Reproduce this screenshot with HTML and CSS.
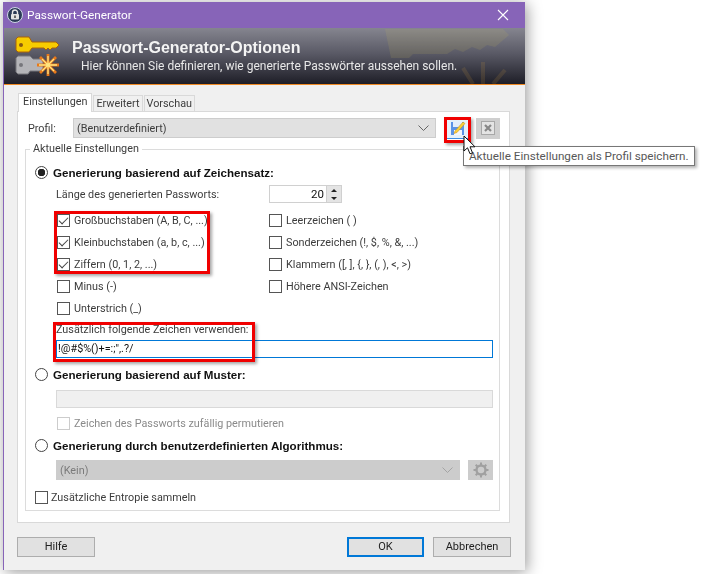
FILE: index.html
```html
<!DOCTYPE html>
<html>
<head>
    <title>Passwort-Generator</title>
    <link rel="stylesheet" href="styles.css">
</head>
<body>
    <div class="window">
        <div class="title-bar">
            <svg class="title-icon" width="16" height="16" viewBox="0 0 16 16">
                <circle cx="8" cy="8" r="7.5" fill="#2b3a55" stroke="#cfd6e6"/>
                <path d="M5.5 7.5V5.5a2.5 2.5 0 0 1 5 0v2" fill="none" stroke="#e6e6e6" stroke-width="1.4"/>
                <rect x="4" y="7" width="8" height="5.5" rx="1" fill="#e2e2e2"/>
                <rect x="7.3" y="8.5" width="1.4" height="2.5" fill="#333"/>
            </svg>
            <span class="title-text">Passwort-Generator</span>
            <svg class="close-icon" width="12" height="12" viewBox="0 0 12 12">
                <path d="M1 1l10 10M11 1L1 11" stroke="#fff" stroke-width="1.1"/>
            </svg>
        </div>

        <div class="banner">
            <svg class="banner-icon" width="46" height="42" viewBox="0 0 46 42">
                <path d="M3 2h11l3 5h24l3 3-3 3h-4l-2 2-2-2-2 2-2-2H17l-3 4H3l-2-2V4z" fill="#f7cc00" stroke="#a8620c"/>
                <circle cx="6" cy="10" r="2" fill="#8a5a10"/>
                <path d="M3 21h12l3 3h10v12H15l-2 3H3l-2-2V23z" fill="#b4b4b8" stroke="#77777c"/>
                <circle cx="6" cy="30" r="2" fill="#77777c"/>
                <path d="M33 19v22M22 30h22M25 22l16 16M41 22L25 38" stroke="#e8781a" stroke-width="2.8"/>
                <path d="M33 21v18M24 30h18M27 24l12 12M39 24L27 36" stroke="#ffe680" stroke-width="1.3"/>
            </svg>
            <svg class="banner-mark" width="128" height="56" viewBox="0 0 128 56">
                <path d="M2 1h118l6 6-14 12-8-2-7 5-8-3-9 5-8-3-8 5H30l-4 4H8z" fill="#c8b85a" opacity=".14"/>
                <path d="M90 56l-10-16M100 56V34M110 56l12-14" stroke="#d8a040" stroke-width="4" opacity=".14"/>
            </svg>
            <div class="banner-text">
                <h1>Passwort-Generator-Optionen</h1>
                <p>Hier können Sie definieren, wie generierte Passwörter aussehen sollen.</p>
            </div>
        </div>

        <div class="tabs">
            <div class="tab tab-active">Einstellungen</div>
            <div class="tab">Erweitert</div>
            <div class="tab">Vorschau</div>
        </div>

        <div class="panel">
            <div class="profile-row">
                <span class="profile-label">Profil:</span>
                <div class="combo profile-combo">
                    <span>(Benutzerdefiniert)</span>
                    <svg class="chevron" width="11" height="6" viewBox="0 0 11 6"><path d="M.5.5l5 5 5-5" fill="none" stroke="#666"/></svg>
                </div>
                <div class="tool-button save-button">
                    <svg width="16" height="16" viewBox="0 0 16 16">
                        <path d="M1 2h13v13H1z" fill="#5b93e6"/>
                        <rect x="3" y="2" width="9" height="5" fill="#e4eefc"/>
                        <rect x="4" y="10" width="8" height="5" fill="#f2f6fd"/>
                        <path d="M5 11l8-9 2 1.500-8 9-3 1z" fill="#f7cf3a" stroke="#c98a10" stroke-width=".5"/>
                    </svg>
                </div>
                <div class="tool-button delete-button">
                    <svg width="14" height="14" viewBox="0 0 14 14">
                        <rect x=".5" y=".5" width="13" height="13" fill="#e4e4e4" stroke="#a8a8a8"/>
                        <path d="M4 4l6 6M10 4l-6 6" stroke="#888" stroke-width="2.2"/>
                    </svg>
                </div>
            </div>

            <fieldset class="group">
                <legend>Aktuelle Einstellungen</legend>

                <div class="radio-row first-radio">
                    <span class="radio radio-on"></span>
                    <b>Generierung basierend auf Zeichensatz:</b>
                </div>

                <div class="length-row">
                    <span class="length-label">Länge des generierten Passworts:</span>
                    <div class="spinner">
                        <span class="spinner-value">20</span>
                        <div class="spinner-arrows">
                            <span class="arrow-up"></span>
                            <span class="arrow-down"></span>
                        </div>
                    </div>
                </div>

                <div class="char-grid">
                    <label class="check-row"><span class="check check-on"></span>Großbuchstaben (A, B, C, ...)</label>
                    <label class="check-row"><span class="check"></span>Leerzeichen ( )</label>
                    <label class="check-row"><span class="check check-on"></span>Kleinbuchstaben (a, b, c, ...)</label>
                    <label class="check-row"><span class="check"></span>Sonderzeichen (!, $, %, &amp;, ...)</label>
                    <label class="check-row"><span class="check check-on"></span>Ziffern (0, 1, 2, ...)</label>
                    <label class="check-row"><span class="check"></span>Klammern ([, ], {, }, (, ), &lt;, &gt;)</label>
                    <label class="check-row"><span class="check"></span>Minus (-)</label>
                    <label class="check-row"><span class="check"></span>Höhere ANSI-Zeichen</label>
                    <label class="check-row"><span class="check"></span>Unterstrich (_)</label>
                </div>

                <div class="extra-label">Zusätzlich folgende Zeichen verwenden:</div>
                <div class="text-input input-focus">!@#$%()+=:;",.?/</div>

                <div class="radio-row second-radio">
                    <span class="radio"></span>
                    <b>Generierung basierend auf Muster:</b>
                </div>
                <div class="text-input input-disabled"></div>
                <label class="check-row check-disabled"><span class="check"></span>Zeichen des Passworts zufällig permutieren</label>

                <div class="radio-row third-radio">
                    <span class="radio"></span>
                    <b>Generierung durch benutzerdefinierten Algorithmus:</b>
                </div>
                <div class="algo-row">
                    <div class="combo algo-combo">
                        <span>(Kein)</span>
                        <svg class="chevron" width="11" height="6" viewBox="0 0 11 6"><path d="M.5.5l5 5 5-5" fill="none" stroke="#a4a4a4"/></svg>
                    </div>
                    <div class="gear-button">
                        <svg width="16" height="16" viewBox="0 0 16 16">
                            <circle cx="8" cy="8" r="4.500" fill="none" stroke="#a0a0a0" stroke-width="2.400"/>
                            <path d="M8 .5v3M8 12.500v3M.5 8h3M12.500 8h3M2.700 2.700l2 2M11.300 11.300l2 2M13.300 2.700l-2 2M4.700 11.300l-2 2" stroke="#a0a0a0" stroke-width="2"/>
                        </svg>
                    </div>
                </div>
                <label class="check-row entropy-row"><span class="check"></span>Zusätzliche Entropie sammeln</label>
            </fieldset>
        </div>

        <div class="footer">
            <div class="button help-button">Hilfe</div>
            <div class="footer-right">
                <div class="button button-default">OK</div>
                <div class="button">Abbrechen</div>
            </div>
        </div>
    </div>

    <div class="mark mark-save"></div>
    <div class="mark mark-letters"></div>
    <div class="mark mark-extra"></div>

    <div class="tooltip">Aktuelle Einstellungen als Profil speichern.</div>
    <svg class="cursor" width="13" height="20" viewBox="0 0 13 20">
        <path d="M1 1v15l3.500-3.200 2.500 6 2.500-1-2.500-6H12z" fill="#fff" stroke="#111"/>
    </svg>
</body>
</html>
```

FILE: styles.css
```css
body {
    margin: 0;
    background-color: white;
    font-family: Roboto, "Liberation Sans", sans-serif;
    font-size: 10.8px;
    color: #3c3c3c;
    height: 574px;
    overflow: hidden;
}

.window {
    margin: 2px 0 0 3px;
    width: 521px;
    height: 568px;
    background-color: #f0f0f0;
    border-left: 1px solid #8764b8;
    box-shadow: 2px 2px 14px rgba(0, 0, 0, 0.4);
    filter: blur(0.35px);
}

.title-bar {
    height: 26px;
    background-color: #8764b8;
    display: flex;
    align-items: center;
    padding: 0 0 0 3px;
    color: white;
    font-size: 11.8px;
}

.title-icon {
    margin-right: 4px;
}

.title-text {
    flex: 1;
}

.close-icon {
    margin-right: 16px;
}

.banner {
    position: relative;
    height: 57px;
    display: flex;
    align-items: center;
    background: linear-gradient(#85858f, #5a5a66 45%, #1e1e27);
    border-bottom: 1px solid #f08a24;
    box-sizing: border-box;
    overflow: hidden;
}

.banner-icon {
    margin-left: 11px;
    flex-shrink: 0;
}

.banner-mark {
    position: absolute;
    right: 14px;
    top: 0;
}

.banner-text {
    position: relative;
    margin-left: 11px;
    color: white;
}

.banner-text h1 {
    margin: 0;
    font-family: "Liberation Sans", sans-serif;
    font-size: 16px;
    font-weight: bold;
    line-height: 20px;
    color: #f4f4f4;
}

.banner-text p {
    margin: 0 0 0 9px;
    font-size: 12px;
    line-height: 16px;
    color: #e8e8e8;
}

.tabs {
    display: flex;
    align-items: flex-end;
    height: 18px;
    margin: 8px 0 0 14px;
    position: relative;
    z-index: 1;
}

.tab {
    height: 15px;
    line-height: 15px;
    padding: 0 2px;
    margin-right: 1px;
    background-color: #f0f0f0;
    border: 1px solid #d9d9d9;
    border-bottom: none;
}

.tab-active {
    height: 18px;
    line-height: 16px;
    padding: 0 4px;
    background-color: white;
    margin-bottom: -1px;
}

.panel {
    box-sizing: border-box;
    margin-left: 13px;
    width: 493px;
    height: 412px;
    background-color: white;
    border: 1px solid #d9d9d9;
}

.profile-row {
    display: flex;
    align-items: center;
    height: 20px;
    margin-top: 6px;
}

.profile-label {
    margin-left: 10px;
    width: 45px;
}

.combo {
    box-sizing: border-box;
    height: 20px;
    display: flex;
    align-items: center;
    justify-content: space-between;
    padding: 0 6px 0 3px;
    background-color: #e1e1e1;
    border: 1px solid #cdcdcd;
}

.profile-combo {
    width: 363px;
}

.tool-button {
    box-sizing: border-box;
    width: 24px;
    height: 21px;
    display: flex;
    align-items: center;
    justify-content: center;
}

.save-button {
    margin-left: 10px;
    background-color: #e5f1fb;
    border-bottom: 1px solid #3c8ce0;
}

.delete-button {
    margin-left: 6px;
    background-color: #cfcfcf;
}

.group {
    box-sizing: border-box;
    margin: 4px 0 0 7px;
    padding: 0;
    width: 475px;
    height: 369px;
    border: 1px solid #dcdcdc;
}

.group legend {
    margin-left: 4px;
    padding: 0 3px;
    line-height: 14px;
}

.radio-row {
    display: flex;
    align-items: center;
    height: 18px;
    margin-left: 9px;
    color: #111;
}

.radio-row b {
    font-family: "Liberation Sans", sans-serif;
    font-size: 11.6px;
}

.first-radio {
    margin-top: 7px;
}

.second-radio {
    margin-top: 7px;
}

.third-radio {
    margin-top: 4px;
}

.radio {
    box-sizing: border-box;
    width: 13px;
    height: 13px;
    margin-right: 5px;
    border: 1px solid #444;
    border-radius: 50%;
    background-color: white;
}

.radio-on {
    background: radial-gradient(circle, #222 0, #222 3.5px, white 4px);
}

.length-row {
    display: flex;
    align-items: center;
    height: 18px;
    margin: 4px 0 0 30px;
}

.length-label {
    width: 213px;
}

.spinner {
    box-sizing: border-box;
    width: 73px;
    height: 18px;
    display: flex;
    align-items: center;
    justify-content: flex-end;
    background-color: white;
    border: 1px solid #d0d0d0;
}

.spinner-value {
    color: #111;
    margin-right: 2px;
    font-size: 11.5px;
}

.spinner-arrows {
    display: flex;
    flex-direction: column;
    width: 14px;
    height: 16px;
    background-color: #e4e4e4;
    border-left: 1px solid #d0d0d0;
    align-items: center;
    justify-content: space-around;
}

.arrow-up {
    border: 3px solid transparent;
    border-top: none;
    border-bottom: 3px solid #222;
}

.arrow-down {
    border: 3px solid transparent;
    border-bottom: none;
    border-top: 3px solid #222;
}

.char-grid {
    display: grid;
    grid-template-columns: 212px 1fr;
    grid-auto-rows: 22px;
    margin: 6px 0 0 31px;
}

.check-row {
    display: flex;
    align-items: center;
}

.check {
    box-sizing: border-box;
    width: 13px;
    height: 13px;
    margin-right: 4px;
    background-color: white;
    border: 1px solid #555;
    flex-shrink: 0;
}

.check-on {
    position: relative;
}

.check-on::after {
    content: "";
    position: absolute;
    left: 3px;
    top: 0;
    width: 4px;
    height: 8px;
    border: solid #444;
    border-width: 0 1px 1px 0;
    transform: rotate(45deg);
}

.extra-label {
    margin: 4px 0 0 30px;
    height: 14px;
    line-height: 14px;
}

.text-input {
    box-sizing: border-box;
    margin: 3px 0 0 30px;
    width: 437px;
    height: 18px;
    line-height: 16px;
    padding-left: 1px;
    color: #111;
}

.input-focus {
    border: 1px solid #0078d7;
}

.input-disabled {
    margin-top: 7px;
    background-color: #f0f0f0;
    border: 1px solid #d9d9d9;
}

.check-disabled {
    height: 18px;
    margin: 6px 0 0 31px;
    color: #8a8a8a;
}

.check-disabled .check {
    border-color: #ccc;
}

.algo-row {
    display: flex;
    margin: 6px 0 0 30px;
    height: 20px;
}

.algo-combo {
    width: 404px;
    background-color: #cccccc;
    border-color: #cccccc;
    color: #7a7a7a;
}

.gear-button {
    width: 25px;
    margin-left: 8px;
    display: flex;
    align-items: center;
    justify-content: center;
    background-color: #cccccc;
}

.entropy-row {
    height: 18px;
    margin: 8px 0 0 9px;
}

.entropy-row .check {
    margin-right: 3px;
}

.footer {
    display: flex;
    justify-content: space-between;
    margin: 14px 14px 0 13px;
}

.footer-right {
    display: flex;
    gap: 9px;
}

.button {
    box-sizing: border-box;
    width: 78px;
    height: 20px;
    line-height: 18px;
    text-align: center;
    background-color: #e1e1e1;
    border: 1px solid #adadad;
    color: #222;
    font-size: 11px;
}

.button-default {
    width: 77px;
    border: 2px solid #0078d7;
    line-height: 16px;
}

.mark {
    position: absolute;
    box-sizing: border-box;
    border: 3px solid #f00000;
    box-shadow: 2px 2px 3px rgba(0, 0, 0, 0.35);
}

.mark-save {
    left: 444px;
    top: 117px;
    width: 27px;
    height: 26px;
}

.mark-letters {
    left: 54px;
    top: 211px;
    width: 156px;
    height: 63px;
}

.mark-extra {
    left: 53px;
    top: 322px;
    width: 202px;
    height: 40px;
}

.tooltip {
    position: absolute;
    left: 463px;
    top: 146px;
    box-sizing: border-box;
    width: 232px;
    height: 20px;
    line-height: 18px;
    padding-left: 5px;
    background-color: white;
    border: 1px solid #777;
    color: #575757;
    font-size: 11.7px;
    white-space: nowrap;
    box-shadow: 2px 2px 3px rgba(0, 0, 0, 0.3);
}

.cursor {
    position: absolute;
    left: 463px;
    top: 135px;
}
```
